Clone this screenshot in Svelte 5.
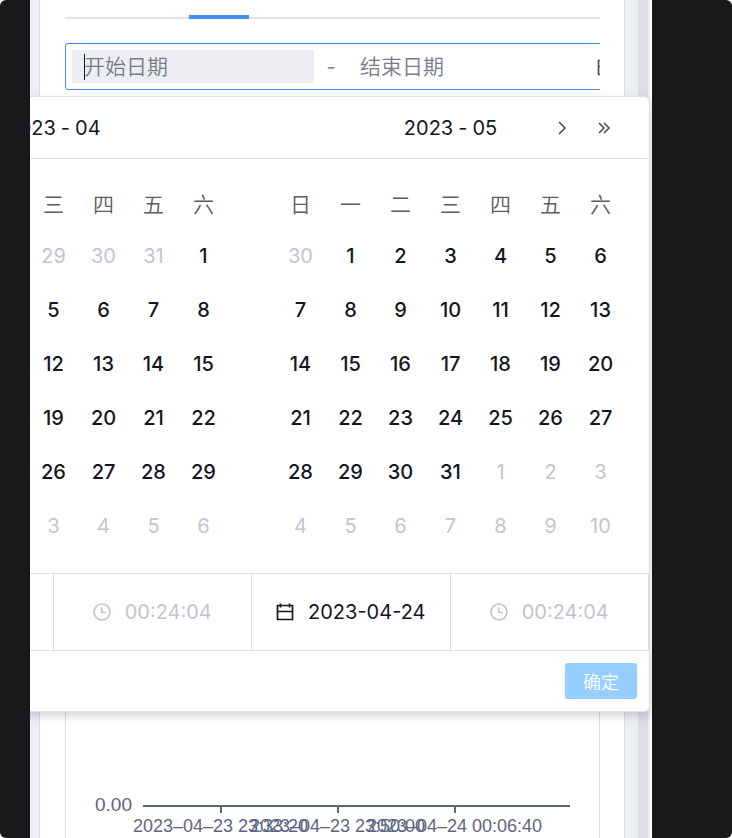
<script>
  const weekdays = ['日', '一', '二', '三', '四', '五', '六'];

  // A six-week grid: trailing days of the previous month, the month itself, then the next one.
  function buildMonth(lead, lastOfPrevious, length) {
    return Array.from({ length: 6 }, (_, week) =>
      Array.from({ length: 7 }, (_, day) => {
        const n = week * 7 + day - lead + 1;
        if (n < 1) return { label: lastOfPrevious + n, outside: true };
        if (n > length) return { label: n - length, outside: true };
        return { label: n, outside: false };
      })
    );
  }

  const months = [
    { year: '2023', month: '04', weeks: buildMonth(6, 31, 30), next: false },
    { year: '2023', month: '05', weeks: buildMonth(1, 30, 31), next: true }
  ];

  const switches = [
    { kind: 'date', label: '2023-04-24', muted: false },
    { kind: 'time', label: '00:24:04', muted: true },
    { kind: 'date', label: '2023-04-24', muted: false },
    { kind: 'time', label: '00:24:04', muted: true }
  ];

  const ticks = ['2023–04–23 23:33:20', '2023–04–23 23:50:00', '2023–04–24 00:06:40'];
</script>

{#snippet calendarIcon()}
  <svg class="icon" viewBox="0 0 18 18" aria-hidden="true">
    <path d="M1.5 2.5h15v14h-15zM1.5 8.5h15M4.5 0.5v4M13.5 0.5v4" />
  </svg>
{/snippet}

{#snippet clockIcon()}
  <svg class="icon" viewBox="0 0 18 18" aria-hidden="true">
    <circle cx="9" cy="9" r="8" />
    <path d="M8.7 4.5v5h4.3" />
  </svg>
{/snippet}

<div class="device">
  <main class="screen">
    <div class="page">
      <section class="card">
        <div class="tabs"><span class="ink"></span></div>
        <div class="clip">
          <div class="range">
            <input class="start" type="text" placeholder="开始日期" aria-label="开始日期" />
            <span class="caret"></span>
            <span class="dash">-</span>
            <input class="end" type="text" placeholder="结束日期" aria-label="结束日期" />
            {@render calendarIcon()}
          </div>
        </div>
        <div class="chart">
          <div class="axis-row">
            <span class="value">0.00</span>
            <div class="axis">
              {#each ticks as tick}
                <div class="tick"><span>{tick}</span></div>
              {/each}
            </div>
          </div>
        </div>
      </section>
      <div class="scrollbar"></div>
    </div>

    <div class="popup">
      <div class="months">
        {#each months as month}
          <div class="month">
            <header>
              <span class="nav"></span>
              <div class="title">
                <button>{month.year}</button><span>-</span><button>{month.month}</button>
              </div>
              <span class="nav">
                {#if month.next}
                  <button aria-label="下个月">
                    <svg viewBox="0 0 14 14" aria-hidden="true"><path d="M4 1l6 6-6 6" /></svg>
                  </button>
                  <button aria-label="下一年">
                    <svg viewBox="0 0 14 14" aria-hidden="true"><path d="M2 2l5 5-5 5M7 2l5 5-5 5" /></svg>
                  </button>
                {/if}
              </span>
            </header>
            <table>
              <thead>
                <tr>{#each weekdays as name}<th scope="col">{name}</th>{/each}</tr>
              </thead>
              <tbody>
                {#each month.weeks as week}
                  <tr>
                    {#each week as day}
                      <td><button class="day" class:outside={day.outside}>{day.label}</button></td>
                    {/each}
                  </tr>
                {/each}
              </tbody>
            </table>
          </div>
        {/each}
      </div>
      <div class="switches">
        {#each switches as item}
          <button class:muted={item.muted}>
            {#if item.kind === 'date'}{@render calendarIcon()}{:else}{@render clockIcon()}{/if}
            <span>{item.label}</span>
          </button>
        {/each}
      </div>
      <footer><button class="confirm">确定</button></footer>
    </div>
  </main>
</div>

<style>
  :global(body) {
    margin: 0;
    background: #fff;
  }
  .device,
  .device * {
    box-sizing: border-box;
  }
  .device {
    height: 100vh;
    min-height: 760px;
    padding: 0 80px 0 30px;
    border-radius: 6px;
    background: #19191b;
    font-family: Inter, 'Noto Sans CJK SC', sans-serif;
    font-size: 20px;
    color: #15171f;
  }
  button {
    padding: 0;
    border: 0;
    background: none;
    font: inherit;
    color: inherit;
    cursor: pointer;
  }
  svg {
    fill: none;
    stroke: currentColor;
  }
  .icon {
    width: 18px;
    height: 18px;
    flex: none;
    stroke-width: 1.7;
  }
  .screen {
    position: relative;
    height: 100%;
    overflow: hidden;
    background: #edeef3;
  }
  .page {
    display: flex;
    height: 100%;
    padding-left: 9px;
    border-right: 2px solid #fff;
  }
  .card {
    flex: 1;
    min-width: 0;
    display: flex;
    flex-direction: column;
    padding: 0 24px 0 25px;
    border: solid #dcdee6;
    border-width: 0 1px;
    background: #fff;
  }
  .scrollbar {
    width: 10px;
    margin: 0 2px 0 13px;
    background: #dcdee6;
  }
  .tabs {
    height: 19px;
    padding: 15px 0 0 124px;
    display: flex;
    background: linear-gradient(#e2e4ea, #e2e4ea) 0 17px / 100% 2px no-repeat;
  }
  .ink {
    width: 60px;
    height: 4px;
    background: #3f8ff8;
  }
  .clip {
    margin: 24px 0;
    overflow: hidden;
  }
  .range {
    display: flex;
    align-items: center;
    width: calc(100% + 24px);
    height: 47px;
    padding: 0 8px 0 6px;
    border: 1px solid #3f8df0;
    border-radius: 3px;
    color: #4a5261;
  }
  input {
    min-width: 0;
    height: 33px;
    padding: 0 12px;
    border: 0;
    outline: none;
    background: none;
    font: inherit;
    font-size: 21px;
    font-weight: 350;
    color: #15171f;
  }
  input::placeholder {
    color: #757d8a;
    opacity: 1;
  }
  .start {
    width: 242px;
    background: #edeef3;
  }
  .caret {
    width: 1px;
    height: 26px;
    margin: 0 229px 0 -230px;
    background: #15171f;
  }
  .dash {
    width: 34px;
    text-align: center;
    color: #7d8592;
  }
  .end {
    flex: 1;
  }
  .chart {
    flex: 1;
    display: flex;
    align-items: flex-end;
    padding: 0 29px;
    border: solid #dcdee6;
    border-width: 0 1px;
    font-family: 'Liberation Sans', Arial, sans-serif;
    color: #5d6580;
  }
  .axis-row {
    flex: 1;
    display: flex;
  }
  .value {
    width: 48px;
    margin-top: -10px;
    font-size: 19px;
    line-height: 20px;
  }
  .axis {
    flex: 1;
    display: flex;
    height: 33px;
    padding-left: 19px;
    border-top: 2px solid #5b667b;
  }
  .tick {
    display: flex;
    flex-direction: column;
    align-items: center;
    width: 117px;
    font-size: 18px;
    line-height: 20px;
    white-space: nowrap;
  }
  .tick::before {
    content: '';
    width: 2px;
    height: 6px;
    margin-bottom: 3px;
    background: #5b667b;
  }
  .popup {
    position: absolute;
    top: 96px;
    right: 2px;
    width: 796px;
    border: 1px solid #dcdee6;
    border-radius: 6px;
    background: #fff;
    box-shadow: 0 4px 10px rgba(20, 24, 36, 0.18);
  }
  .months {
    display: flex;
  }
  .month {
    flex: 1;
  }
  header {
    display: flex;
    align-items: center;
    height: 62px;
    border-bottom: 1px solid #dcdee6;
  }
  .title {
    display: flex;
    gap: 5px;
  }
  .nav {
    flex: 1;
    display: flex;
    justify-content: flex-end;
    gap: 28px;
    padding-right: 38px;
    color: #3d4556;
  }
  .nav button,
  .nav svg {
    display: block;
    width: 14px;
    height: 14px;
    stroke-width: 1.5;
  }
  table {
    width: 350px;
    margin: 22px auto 20px;
    border-collapse: collapse;
    table-layout: fixed;
  }
  th {
    height: 48px;
    padding: 0 0 4px;
    font-size: 21px;
    font-weight: 350;
    color: #5c5c5f;
  }
  td {
    height: 54px;
    padding: 0;
  }
  .day {
    display: block;
    width: 50px;
    height: 54px;
    font-weight: 500;
  }
  .day.outside {
    font-weight: 400;
    color: #c2c5d0;
  }
  .switches {
    display: flex;
    height: 78px;
    border: solid #dcdee6;
    border-width: 1px 0;
  }
  .switches button {
    flex: 1;
    display: flex;
    align-items: center;
    justify-content: center;
    gap: 14px;
    border-right: 1px solid #dcdee6;
  }
  .switches .muted {
    color: #c2c5ce;
  }
  footer {
    display: flex;
    justify-content: flex-end;
    padding: 12px;
  }
  .confirm {
    width: 72px;
    height: 36px;
    border-radius: 3px;
    background: #96cfff;
    font-size: 18px;
    font-weight: 350;
    color: #fff;
  }
</style>
